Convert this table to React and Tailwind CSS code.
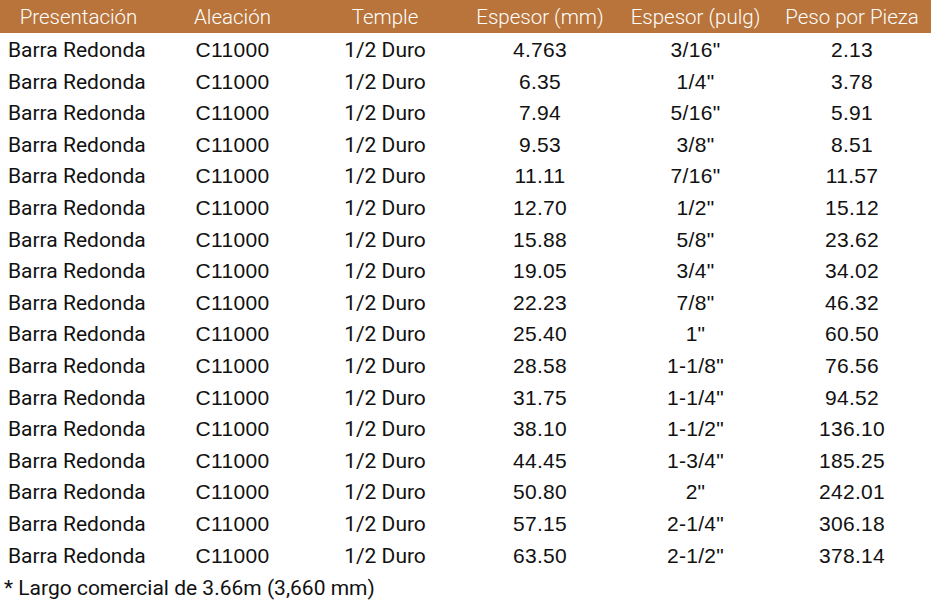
const rows = [
  ['4.763', '3/16"', '2.13'],
  ['6.35', '1/4"', '3.78'],
  ['7.94', '5/16"', '5.91'],
  ['9.53', '3/8"', '8.51'],
  ['11.11', '7/16"', '11.57'],
  ['12.70', '1/2"', '15.12'],
  ['15.88', '5/8"', '23.62'],
  ['19.05', '3/4"', '34.02'],
  ['22.23', '7/8"', '46.32'],
  ['25.40', '1"', '60.50'],
  ['28.58', '1-1/8"', '76.56'],
  ['31.75', '1-1/4"', '94.52'],
  ['38.10', '1-1/2"', '136.10'],
  ['44.45', '1-3/4"', '185.25'],
  ['50.80', '2"', '242.01'],
  ['57.15', '2-1/4"', '306.18'],
  ['63.50', '2-1/2"', '378.14'],
]

const cols = 'grid grid-cols-[157px_151px_154px_156px_155px_158px]'
const head = "font-['Roboto',sans-serif] font-light text-[20.5px] leading-[33px] text-white text-center"
const body = "font-['Roboto',sans-serif] text-[21px] leading-[31.6px] text-[#111]"
const num = "font-['Liberation_Sans',Arial,sans-serif] text-[21px] leading-[31.6px] tracking-[0.3px] text-[#111] text-center"

export default function App() {
  return (
    <div className="w-[931px] h-[602px] bg-white overflow-hidden">
      <div className={`${cols} h-[33px] items-center bg-[#b8743a] pt-[1px]`}>
        <div className={head}>Presentación</div>
        <div className={head}>Aleación</div>
        <div className={head}>Temple</div>
        <div className={head}>Espesor (mm)</div>
        <div className={head}>Espesor (pulg)</div>
        <div className={head}>Peso por Pieza</div>
      </div>

      {rows.map((r, i) => (
        <div key={i} className={`${cols} h-[31.6px] items-baseline pt-[1px]`}>
          <div className={`${body} pl-[8px]`}>Barra Redonda</div>
          <div className={num}>C11000</div>
          <div className={`${body} text-center`}>1/2 Duro</div>
          <div className={num}>{r[0]}</div>
          <div className={num}>{r[1]}</div>
          <div className={num}>{r[2]}</div>
        </div>
      ))}

      <div className={`${body} pl-[4px] pt-[3px]`}>
        * Largo comercial de 3.66m (3,660 mm)
      </div>
    </div>
  )
}
